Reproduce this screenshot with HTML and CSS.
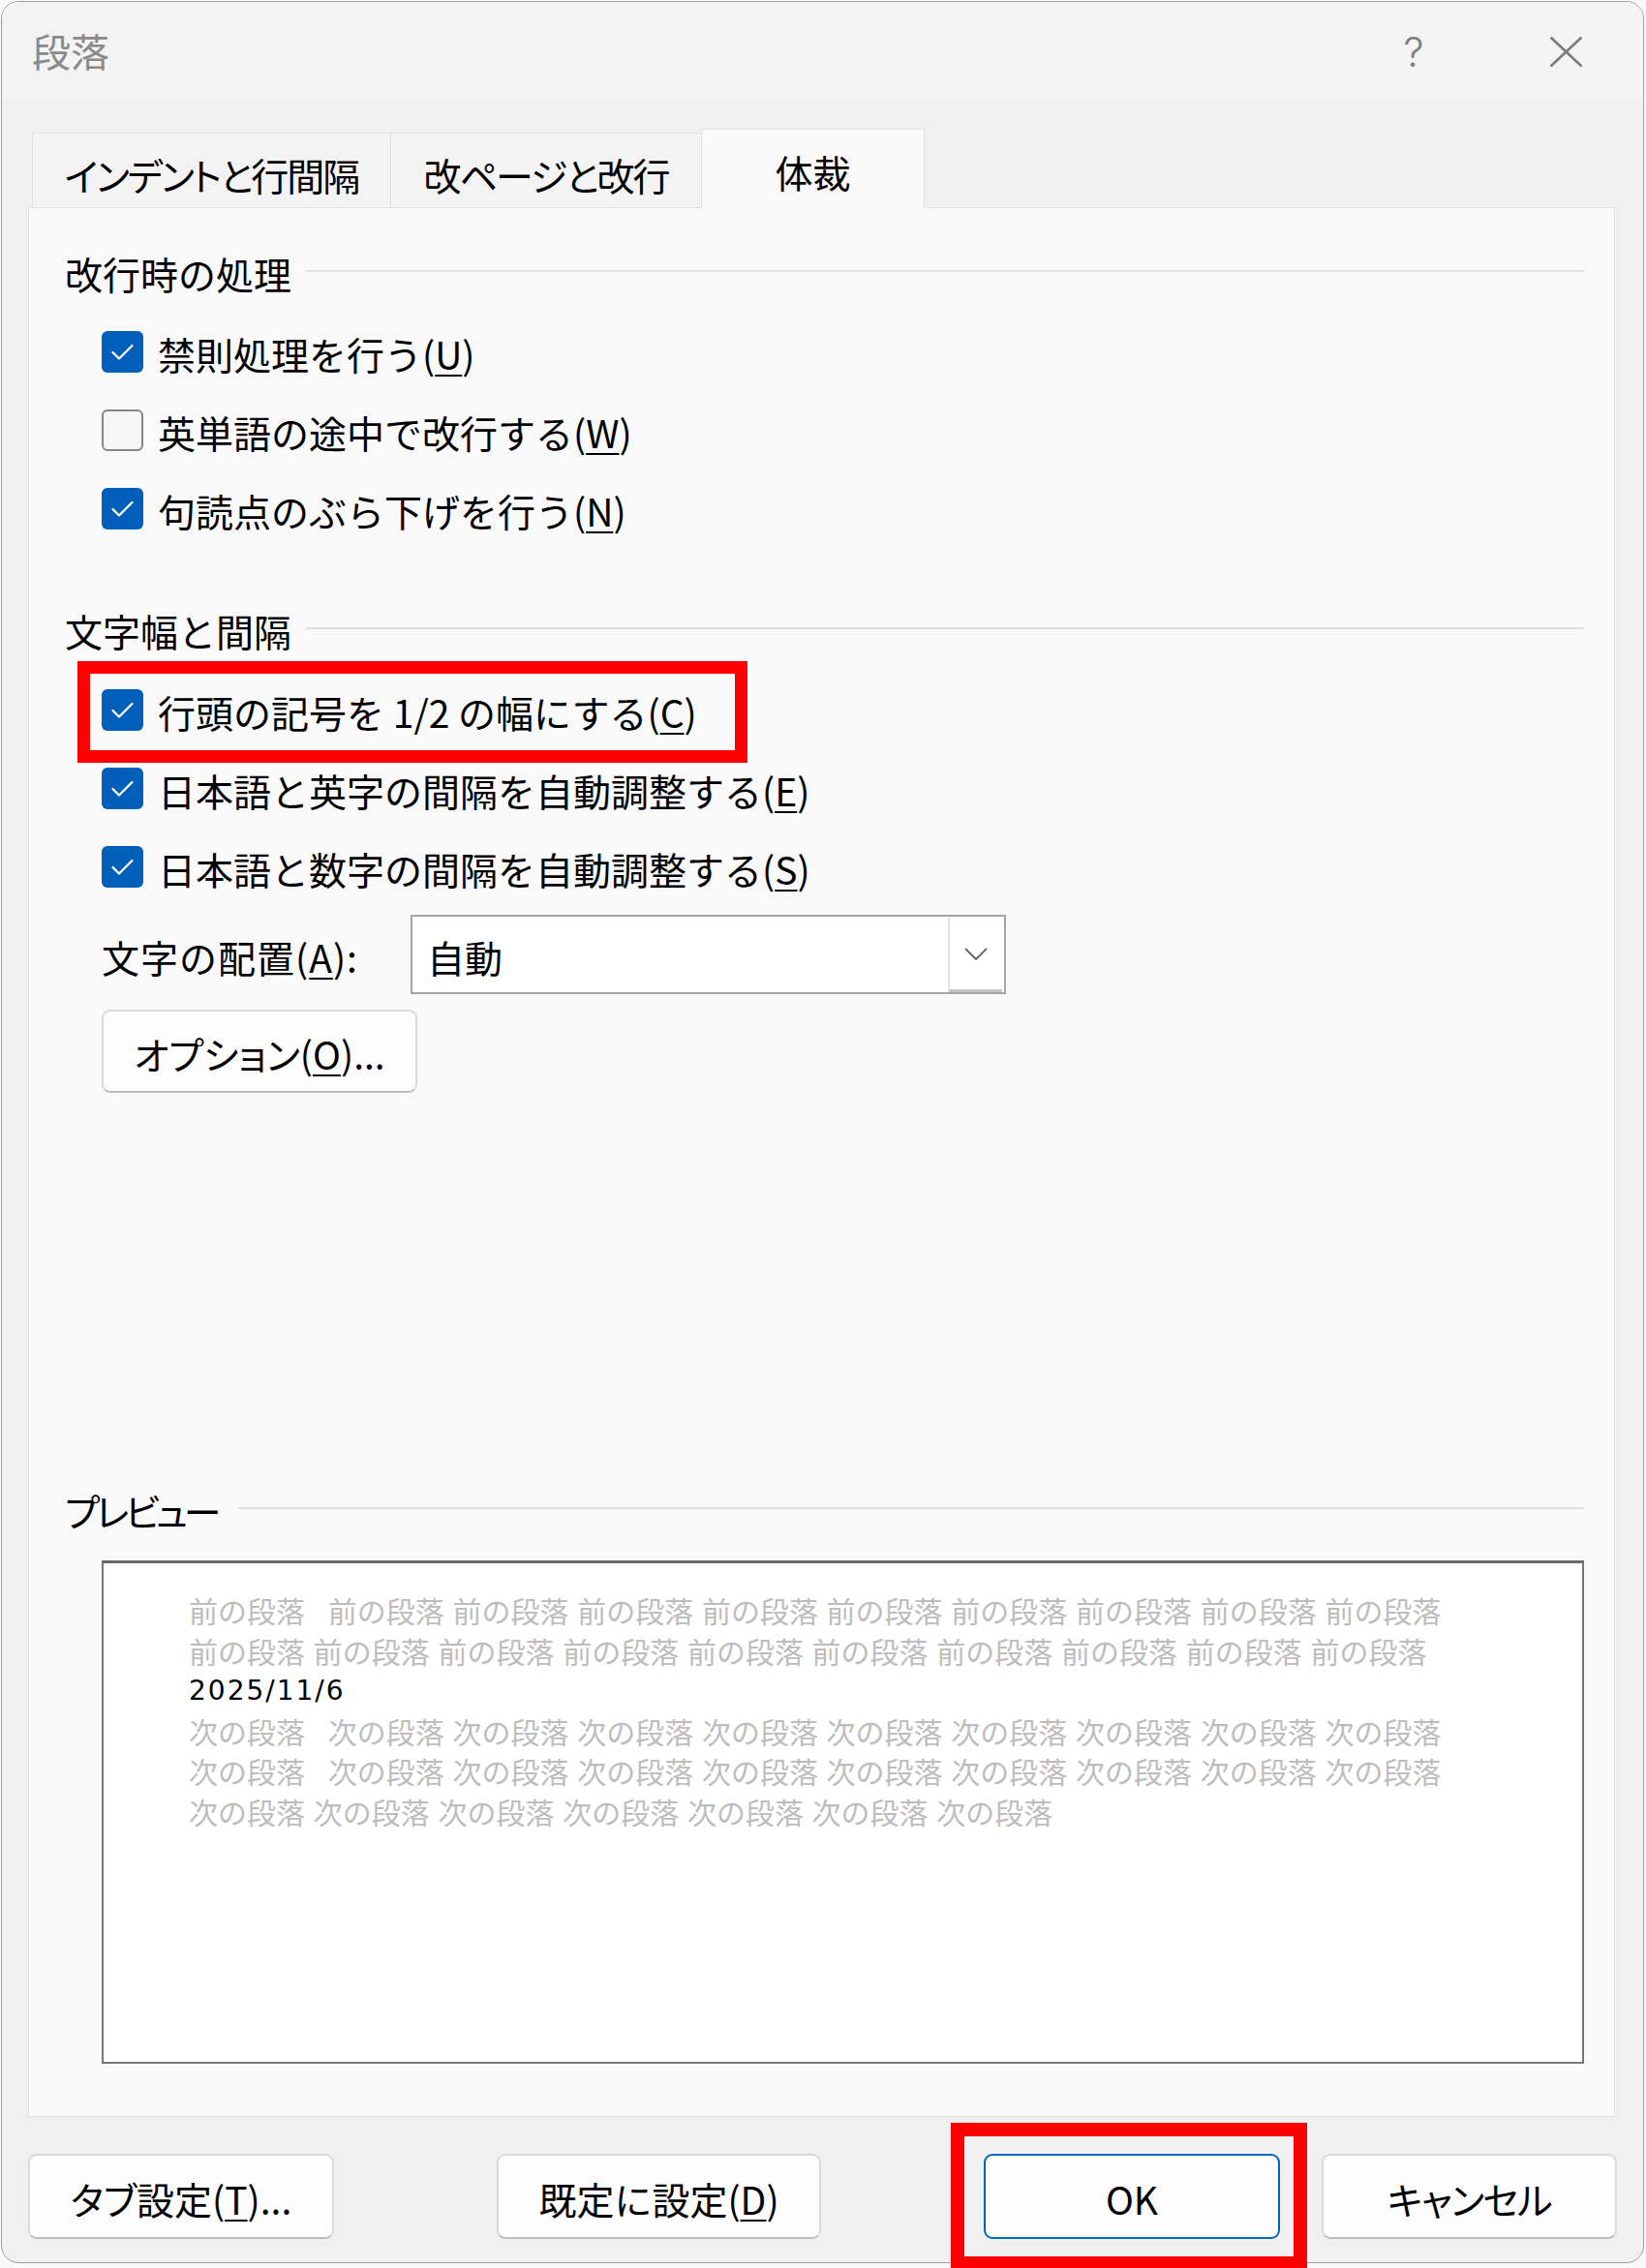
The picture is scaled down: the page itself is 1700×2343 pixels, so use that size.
FILE: index.html
```html
<!DOCTYPE html>
<html lang="ja">
<head>
<meta charset="utf-8">
<title>段落</title>
<link rel="stylesheet" href="styles.css">
</head>
<body>
<div class="dialog">
  <div class="titlebar">
    <span class="title">段落</span>
    <span class="help">?</span>
    <svg class="close" viewBox="0 0 35 33" width="35" height="33"><path d="M1.5 1.5 L33.5 31.5 M33.5 1.5 L1.5 31.5" stroke="#7c7c7c" stroke-width="2.6" fill="none"/></svg>
  </div>
  <div class="tabs">
    <div class="tab tab-1">インデントと行間隔</div>
    <div class="tab tab-2">改ページと改行</div>
    <div class="tab tab-3 active">体裁</div>
  </div>
  <div class="panel">
    <div class="group-title"><span>改行時の処理</span><i class="rule"></i></div>
    <div class="check-row first">
      <span class="cb on"><svg viewBox="0 0 43 43" width="43" height="43"><path d="M11.5 22 L18 28.5 L31.5 15" stroke="#fff" stroke-width="2.2" fill="none" stroke-linecap="round" stroke-linejoin="round"/></svg></span>
      <span class="lbl">禁則処理を行う(<u>U</u>)</span>
    </div>
    <div class="check-row">
      <span class="cb off"></span>
      <span class="lbl">英単語の途中で改行する(<u>W</u>)</span>
    </div>
    <div class="check-row">
      <span class="cb on"><svg viewBox="0 0 43 43" width="43" height="43"><path d="M11.5 22 L18 28.5 L31.5 15" stroke="#fff" stroke-width="2.2" fill="none" stroke-linecap="round" stroke-linejoin="round"/></svg></span>
      <span class="lbl">句読点のぶら下げを行う(<u>N</u>)</span>
    </div>

    <div class="group-title second"><span>文字幅と間隔</span><i class="rule"></i></div>
    <div class="check-row first">
      <span class="cb on"><svg viewBox="0 0 43 43" width="43" height="43"><path d="M11.5 22 L18 28.5 L31.5 15" stroke="#fff" stroke-width="2.2" fill="none" stroke-linecap="round" stroke-linejoin="round"/></svg></span>
      <span class="lbl">行頭の記号を 1/2 の幅にする(<u>C</u>)</span>
      <span class="mark mark-row"></span>
    </div>
    <div class="check-row">
      <span class="cb on"><svg viewBox="0 0 43 43" width="43" height="43"><path d="M11.5 22 L18 28.5 L31.5 15" stroke="#fff" stroke-width="2.2" fill="none" stroke-linecap="round" stroke-linejoin="round"/></svg></span>
      <span class="lbl">日本語と英字の間隔を自動調整する(<u>E</u>)</span>
    </div>
    <div class="check-row">
      <span class="cb on"><svg viewBox="0 0 43 43" width="43" height="43"><path d="M11.5 22 L18 28.5 L31.5 15" stroke="#fff" stroke-width="2.2" fill="none" stroke-linecap="round" stroke-linejoin="round"/></svg></span>
      <span class="lbl">日本語と数字の間隔を自動調整する(<u>S</u>)</span>
    </div>

    <div class="align-row">
      <span class="align-label">文字の配置(<u>A</u>):</span>
      <div class="select">
        <span class="select-value">自動</span>
        <span class="select-btn"><svg viewBox="0 0 24 13" width="24" height="13"><path d="M1 1 L12 12 L23 1" stroke="#5f5f5f" stroke-width="1.8" fill="none"/></svg></span>
      </div>
    </div>
    <div class="btn option-btn kana">オプション(<u>O</u>)...</div>

    <div class="preview-group">
      <div class="group-title kana narrow"><span>プレビュー</span><i class="rule"></i></div>
      <div class="preview">
        <div class="pline grey">前の段落&ensp; 前の段落 前の段落 前の段落 前の段落 前の段落 前の段落 前の段落 前の段落 前の段落</div>
        <div class="pline grey">前の段落 前の段落 前の段落 前の段落 前の段落 前の段落 前の段落 前の段落 前の段落 前の段落</div>
        <div class="pline date">2025/11/6</div>
        <div class="pline grey">次の段落&ensp; 次の段落 次の段落 次の段落 次の段落 次の段落 次の段落 次の段落 次の段落 次の段落</div>
        <div class="pline grey">次の段落&ensp; 次の段落 次の段落 次の段落 次の段落 次の段落 次の段落 次の段落 次の段落 次の段落</div>
        <div class="pline grey">次の段落 次の段落 次の段落 次の段落 次の段落 次の段落 次の段落</div>
      </div>
    </div>
  </div>
  <div class="buttons">
    <div class="btn btn-tab kana">タブ設定(<u>T</u>)...</div>
    <div class="btn btn-default">既定に設定(<u>D</u>)</div>
    <div class="btn btn-ok">OK<span class="mark mark-ok"></span></div>
    <div class="btn btn-cancel kana">キャンセル</div>
  </div>
</div>
</body>
</html>
```

FILE: styles.css
```css
* {
  box-sizing: border-box;
}

html,
body {
  margin: 0;
  padding: 0;
  width: 1700px;
  height: 2343px;
  overflow: hidden;
  background: #fafafa;
}

body {
  font-family: "Noto Sans CJK JP", "Noto Sans", sans-serif;
  color: #000;
}

.kana {
  font-feature-settings: "palt";
}

.dialog {
  position: relative;
  margin: 1px 0 0 1px;
  width: 1697px;
  height: 2337px;
  border: 1px solid #9d9d9d;
  border-radius: 18px;
  background: #f0f0f0;
  display: flex;
  flex-direction: column;
}

/* title bar */
.titlebar {
  flex: none;
  height: 103px;
  display: flex;
  align-items: center;
  padding: 0 62px 0 31px;
  background: #f3f3f3;
  border-radius: 17px 17px 0 0;
}

.title {
  font-size: 40px;
  line-height: 1;
  color: #8a8a8a;
  margin-top: -4px;
}

.help {
  margin-left: auto;
  margin-right: 120px;
  width: 40px;
  text-align: center;
  font-family: Inter, "Noto Sans", sans-serif;
  font-weight: 300;
  font-size: 42px;
  line-height: 1;
  color: #7d7d7d;
}

.close {
  display: block;
  flex: none;
}

/* tabs */
.tabs {
  flex: none;
  height: 109px;
  display: flex;
  align-items: flex-end;
  padding-left: 31px;
  position: relative;
  z-index: 2;
}

.tab {
  height: 77px;
  display: flex;
  align-items: center;
  justify-content: center;
  padding-top: 8px;
  font-size: 39px;
  line-height: 1;
  font-feature-settings: "palt";
  letter-spacing: -2px;
  background: #f3f3f3;
  border: 1px solid #e1e1e1;
  border-bottom: none;
  white-space: nowrap;
}

.tab-1 {
  width: 371px;
}

.tab-2 {
  width: 322px;
  margin-left: -1px;
}

.tab-3 {
  width: 231px;
  margin-left: -1px;
  letter-spacing: 0;
}

.tab.active {
  height: 82px;
  margin-bottom: -1px;
  padding-top: 6px;
  background: #f9f9f9;
  position: relative;
}

/* panel */
.panel {
  flex: none;
  margin-left: 27px;
  width: 1639px;
  height: 1973px;
  border: 1px solid #e1e1e1;
  background: #f9f9f9;
  padding: 41px 31px 54px 37px;
  display: flex;
  flex-direction: column;
  position: relative;
  z-index: 1;
}

.group-title {
  flex: none;
  height: 52px;
  display: flex;
  align-items: center;
  font-size: 39px;
  line-height: 1;
  white-space: nowrap;
}

.group-title .rule {
  flex: 1;
  height: 2px;
  margin-left: 15px;
  margin-top: -5px;
  background: #e0e0e0;
}

.group-title.narrow span {
  letter-spacing: -4px;
}

.group-title.narrow .rule {
  margin-left: 22px;
}

.group-title.second {
  margin-top: 59px;
}

.check-row {
  flex: none;
  height: 81px;
  display: flex;
  align-items: center;
  padding-left: 38px;
  position: relative;
}

.check-row.first {
  margin-top: 15px;
}

.group-title.second + .check-row.first {
  margin-top: 16px;
}

.cb {
  flex: none;
  width: 43px;
  height: 43px;
  border-radius: 6px;
}

.cb svg {
  display: block;
}

.cb.on {
  background: #005fb8;
}

.cb.off {
  border: 2px solid #868686;
  background: #f6f6f6;
}

.lbl {
  margin-left: 15px;
  padding-top: 4px;
  font-size: 39px;
  line-height: 1;
  white-space: nowrap;
}

u {
  text-decoration-thickness: 2px;
  text-underline-offset: 5px;
}

/* red annotation boxes */
.mark {
  position: absolute;
  border: 13px solid #ff0000;
  pointer-events: none;
}

.mark-row {
  left: 13px;
  top: -10px;
  width: 692px;
  height: 105px;
}

.mark-ok {
  left: -36px;
  top: -34px;
  width: 368px;
  height: 152px;
  border-width: 14px;
}

/* alignment row */
.align-row {
  flex: none;
  margin-top: 9px;
  height: 82px;
  display: flex;
  align-items: center;
  padding-left: 38px;
}

.align-label {
  width: 319px;
  padding-top: 4px;
  font-size: 39px;
  line-height: 1;
  white-space: nowrap;
  letter-spacing: 1px;
}

.select {
  width: 615px;
  height: 82px;
  border: 2px solid #a6a6a6;
  background: #fff;
  display: flex;
  align-items: stretch;
}

.select-value {
  flex: 1;
  display: flex;
  align-items: center;
  padding: 4px 0 0 15px;
  font-size: 39px;
  line-height: 1;
}

.select-btn {
  width: 56px;
  margin: 1px 2px 0 0;
  border-left: 2px solid #e4e4e4;
  border-bottom: 3px solid #c4c4c4;
  display: flex;
  align-items: center;
  justify-content: center;
}

.select-btn svg {
  display: block;
}

/* buttons */
.btn {
  flex: none;
  height: 88px;
  display: flex;
  align-items: center;
  justify-content: center;
  padding-top: 4px;
  border: 2px solid #dadada;
  border-bottom-color: #bdbdbd;
  border-radius: 9px;
  background: #fdfdfd;
  font-size: 39px;
  line-height: 1;
  white-space: nowrap;
  position: relative;
}

.option-btn {
  margin: 16px 0 0 38px;
  width: 326px;
  height: 86px;
}

/* preview */
.preview-group {
  margin-top: auto;
  flex: none;
}

.preview {
  margin: 26px 0 0 38px;
  width: 1531px;
  height: 520px;
  background: #fff;
  border: 2px solid #787878;
  border-top: 3px solid #6a6a6a;
  padding: 28px 0 0 88px;
}

.pline {
  height: 41.5px;
  line-height: 41.5px;
  font-size: 30px;
  white-space: pre;
  word-spacing: 2px;
}

.pline.grey {
  color: #bdbdbd;
}

.pline.date {
  font-family: "DejaVu Sans", "Noto Sans", sans-serif;
  font-size: 28px;
  letter-spacing: 2px;
  color: #000;
}

/* bottom buttons */
.buttons {
  flex: none;
  display: flex;
  margin-top: 38px;
  padding-left: 27px;
}

.btn-tab {
  width: 316px;
}

.btn-default {
  width: 335px;
  margin-left: 168px;
}

.btn-ok {
  width: 306px;
  margin-left: 168px;
  border-color: #0067c0;
}

.btn-cancel {
  width: 305px;
  margin-left: 43px;
  letter-spacing: -1.5px;
}
```
